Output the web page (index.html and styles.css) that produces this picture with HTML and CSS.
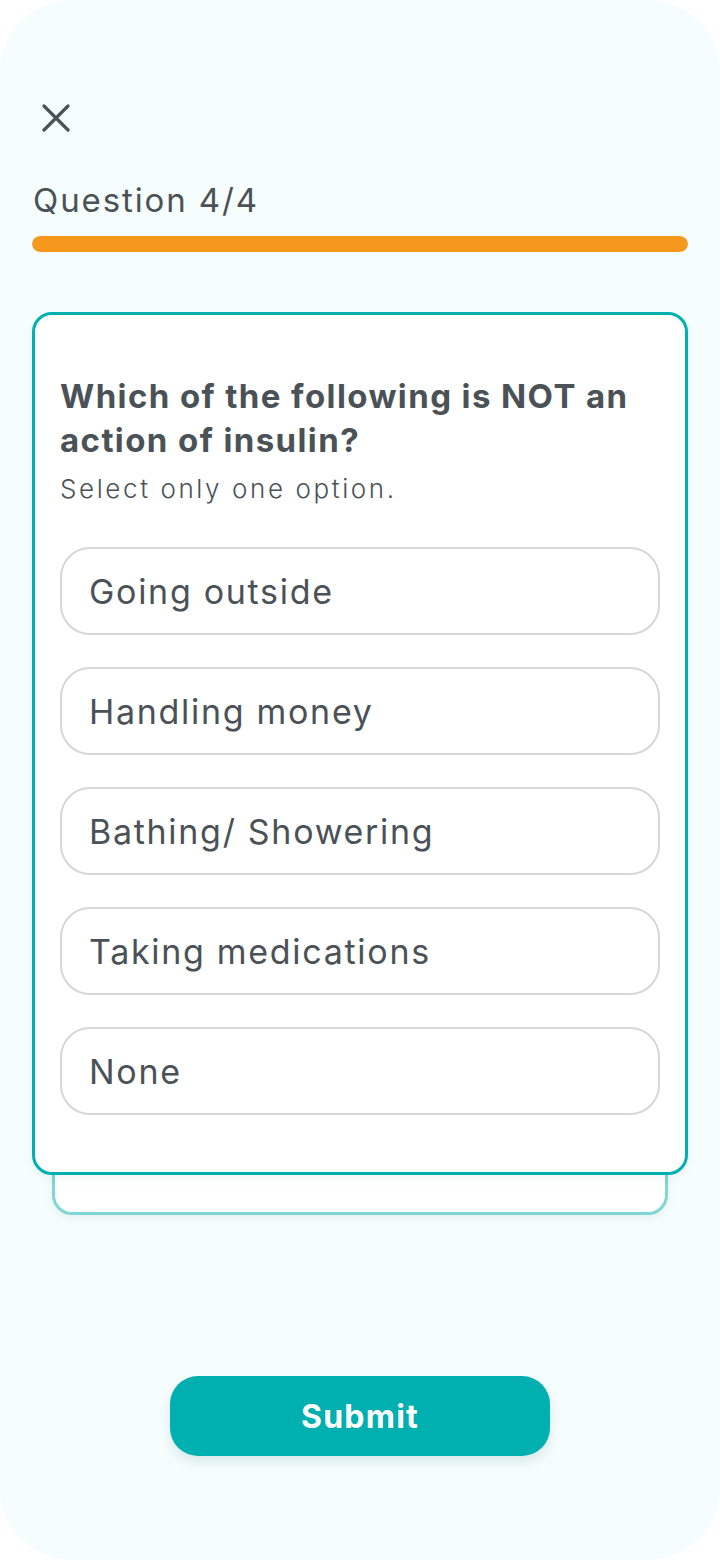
FILE: index.html
```html
<!DOCTYPE html>
<html lang="en">
<head>
<meta charset="utf-8">
<title>Quiz</title>
<link rel="stylesheet" href="styles.css">
</head>
<body>
<div class="screen">
  <button class="close" aria-label="Close">
    <svg width="28" height="28" viewBox="0 0 28 28"><path d="M2 2 L26 26 M26 2 L2 26" stroke="#4b5257" stroke-width="3.2" stroke-linecap="round" fill="none"/></svg>
  </button>
  <div class="progress-label">Question 4/4</div>
  <div class="progress"><div class="progress-fill" style="width:100%"></div></div>

  <div class="card-stack">
    <div class="card-back"></div>
    <div class="card">
      <h1 class="question">Which of the following is NOT an action of insulin?</h1>
      <p class="hint">Select only one option.</p>
      <div class="options">
        <div class="option">Going outside</div>
        <div class="option">Handling money</div>
        <div class="option">Bathing/ Showering</div>
        <div class="option">Taking medications</div>
        <div class="option">None</div>
      </div>
    </div>
  </div>

  <div class="actions">
    <button class="submit">Submit</button>
  </div>
</div>
</body>
</html>
```
FILE: styles.css
```css
* { box-sizing: border-box; }
html, body {
  margin: 0;
  padding: 0;
  background: #ffffff;
}
body {
  font-family: Inter, "Noto Sans", "Liberation Sans", sans-serif;
  color: #4b5257;
}
.screen {
  width: 720px;
  height: 1560px;
  background: #f6fdfd;
  border-radius: 72px;
  padding: 104px 32px 0;
  display: flex;
  flex-direction: column;
}
.close {
  width: 28px;
  height: 28px;
  margin: 0 0 0 10px;
  padding: 0;
  border: 0;
  background: none;
  display: block;
}
.close svg { display: block; }
.progress-label {
  margin-top: 48px;
  font-size: 33px;
  line-height: 40px;
  font-weight: 400;
  letter-spacing: 1.9px;
  padding-left: 1px;
}
.progress {
  margin-top: 16px;
  height: 16px;
  border-radius: 8px;
  background: #e8eeee;
  overflow: hidden;
}
.progress-fill {
  height: 100%;
  background: #f7981e;
  border-radius: 8px;
}
.card-stack {
  position: relative;
  margin-top: 60px;
}
.card-back {
  position: absolute;
  left: 20px;
  right: 20px;
  top: 60px;
  bottom: -40px;
  border: 3px solid #80d5d5;
  border-radius: 20px;
  background: #ffffff;
  box-shadow: 0 4px 10px rgba(0, 90, 90, 0.06);
}
.card {
  position: relative;
  background: #ffffff;
  border: 3px solid #00b0b0;
  border-radius: 20px;
  padding: 59px 25px 57px;
  box-shadow: 0 4px 10px rgba(0, 90, 90, 0.06);
}
.question {
  margin: 0;
  font-size: 33px;
  line-height: 44px;
  font-weight: 700;
  letter-spacing: 1.4px;
  color: #4b5257;
}
.hint {
  margin: 9px 0 0;
  font-size: 26px;
  line-height: 36px;
  font-weight: 300;
  letter-spacing: 2.6px;
  color: #4b5257;
}
.options {
  margin-top: 40px;
  display: flex;
  flex-direction: column;
  gap: 32px;
}
.option {
  height: 88px;
  border: 2px solid #d7d7d7;
  border-radius: 30px;
  background: #ffffff;
  padding: 0 27px;
  display: flex;
  align-items: center;
  font-size: 34px;
  font-weight: 400;
  letter-spacing: 1.7px;
  color: #4b5257;
}
.actions {
  margin-top: 201px;
  display: flex;
  justify-content: center;
}
.submit {
  width: 380px;
  height: 80px;
  border: 0;
  border-radius: 28px;
  background: #00b0b0;
  color: #ffffff;
  font-family: Inter, "Noto Sans", "Liberation Sans", sans-serif;
  font-size: 32px;
  font-weight: 700;
  letter-spacing: 1.2px;
  box-shadow: 0 6px 12px rgba(0, 100, 110, 0.12);
}
```
